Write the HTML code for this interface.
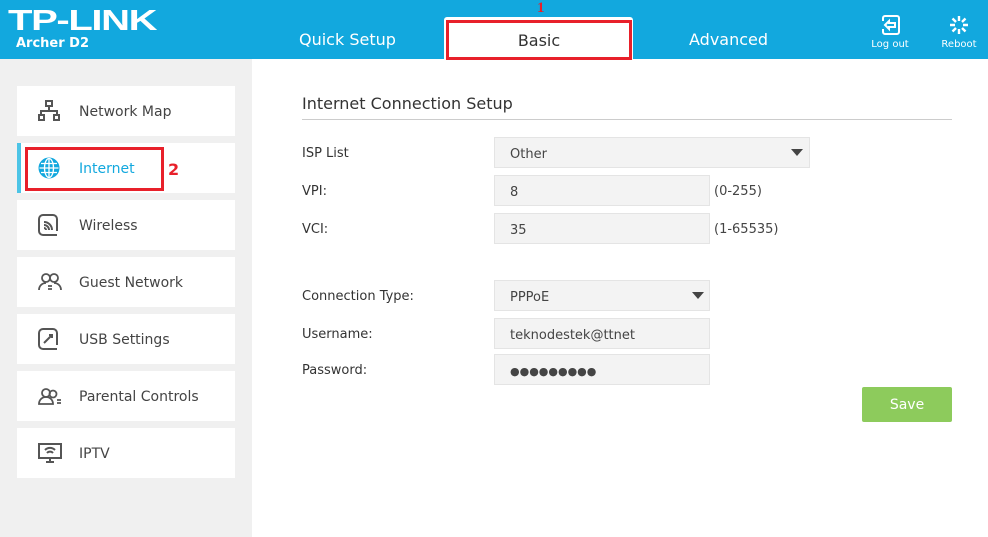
<!DOCTYPE html>
<html><head><meta charset="utf-8"><style>
*{margin:0;padding:0;box-sizing:border-box}
body{width:988px;height:537px;overflow:hidden;background:#fff;font-family:"DejaVu Sans","Liberation Sans",sans-serif;color:#333;position:relative}
.hdr{position:absolute;left:0;top:0;width:988px;height:59px;background:#12a8de}
.logo{position:absolute;left:8px;top:5px;color:#fff;font:bold 29px "Liberation Sans",sans-serif;letter-spacing:-1px;transform:scaleX(1.38);transform-origin:left}
.model{position:absolute;left:16px;top:36px;color:#fff;font:bold 13px "DejaVu Sans",sans-serif}
.tab{position:absolute;top:30px;color:#fff;font-size:16px}
.basic{position:absolute;left:444px;top:17px;width:189px;height:43px;background:#fff;border-radius:3px 3px 0 0}
.basicr{position:absolute;left:446px;top:20px;width:186px;height:40px;border:3px solid #e8202a;text-align:center;font-size:16px;color:#333;padding-top:8px}
.n1{position:absolute;left:537px;top:0px;color:#e8202a;font:bold 15px "Liberation Serif",serif}
.hi{position:absolute;color:#fff;font-size:10px;text-align:center}
.side{position:absolute;left:0;top:59px;width:252px;height:478px;background:#f0f0f0}
.item{position:absolute;left:17px;width:218px;height:50px;background:#fff;font-size:14px;color:#444}
.item span{position:absolute;left:62px;top:18px}
.item svg{position:absolute;left:21px;top:14px}
.lbl{position:absolute;left:302px;font-size:13px;color:#333}
.inp{position:absolute;left:494px;height:31px;background:#f3f3f3;border:1px solid #e4e4e4;font-size:13px;color:#444;padding:9px 0 0 15px}
.hint{position:absolute;font-size:13px;color:#444}
.arr{position:absolute;right:6px;top:11px;width:0;height:0;border-left:6px solid transparent;border-right:6px solid transparent;border-top:7px solid #444}
</style></head><body>
<div class="hdr">
<div class="logo">TP-LINK</div>
<div class="model">Archer D2</div>
<div class="tab" style="left:299px">Quick Setup</div>
<div class="tab" style="left:689px">Advanced</div>
<div class="basic"></div>
<div class="basicr">Basic</div>
<div class="n1">1</div>
<svg style="position:absolute;left:879px;top:15px" width="22" height="20" viewBox="0 0 22 20" fill="none" stroke="#fff" stroke-width="2"><path d="M4 6V3a2 2 0 0 1 2-2h12a2 2 0 0 1 2 2v14a2 2 0 0 1-2 2H6a2 2 0 0 1-2-2v-3"/><path d="M6 10l4-4v2h6v4h-6v2z"/></svg>
<div class="hi" style="left:866px;top:39px;width:48px">Log out</div>
<svg style="position:absolute;left:949px;top:15px" width="20" height="20" viewBox="0 0 20 20" stroke="#fff" stroke-width="2.4"><path d="M10 1v5M10 14v5M1 10h5M14 10h5M3.5 3.5l3.5 3.5M13 13l3.5 3.5M16.5 3.5L13 7M7 13l-3.5 3.5"/></svg>
<div class="hi" style="left:935px;top:39px;width:48px">Reboot</div>
</div>
<div class="side">
<div class="item" style="top:27px"><svg width="22" height="22" viewBox="0 0 22 22" fill="none" stroke="#555" stroke-width="2"><rect x="8" y="1" width="6" height="5"/><path d="M11 6v5M3 15v-4h16v4"/><rect x="1" y="15" width="5" height="5"/><rect x="16" y="15" width="5" height="5"/></svg><span>Network Map</span></div>
<div class="item" style="top:84px"><div style="position:absolute;left:0;top:0;width:4px;height:50px;background:#4cc4e6"></div><svg width="22" height="22" viewBox="0 0 22 22" fill="none" stroke="#12a8de" stroke-width="2"><circle cx="11" cy="11" r="9.5" fill="#12a8de"/><path d="M1.5 11h19M11 1.5v19M3 6.5h16M3 15.5h16" stroke="#fff" stroke-width="1.3"/><ellipse cx="11" cy="11" rx="4.5" ry="9.5" stroke="#fff" stroke-width="1.3"/></svg><span style="color:#12a8de">Internet</span>
<div style="position:absolute;left:8px;top:4px;width:139px;height:44px;border:3px solid #e8202a"></div>
<div style="position:absolute;left:151px;top:17px;color:#e8202a;font:bold 16px 'DejaVu Sans',sans-serif">2</div></div>
<div class="item" style="top:141px"><svg width="22" height="22" viewBox="0 0 22 22" fill="none" stroke="#555" stroke-width="2"><path d="M19 17V5a4 4 0 0 0-4-4H5a4 4 0 0 0-4 4v12a4 4 0 0 0 4 4h14"/><path d="M6 8a8 8 0 0 1 8 8M6 11a5 5 0 0 1 5 5M6 14a2 2 0 0 1 2 2"/></svg><span>Wireless</span></div>
<div class="item" style="top:198px"><svg width="24" height="22" viewBox="0 0 24 22" fill="none" stroke="#555" stroke-width="1.8"><circle cx="8" cy="7" r="4"/><circle cx="16" cy="7" r="4"/><path d="M1 19c0-4 3-7 7-7M23 19c0-4-3-7-7-7M10 15h4M10 18h4"/></svg><span>Guest Network</span></div>
<div class="item" style="top:255px"><svg width="22" height="22" viewBox="0 0 22 22" fill="none" stroke="#555" stroke-width="2"><path d="M19 17V5a4 4 0 0 0-4-4H5a4 4 0 0 0-4 4v12a4 4 0 0 0 4 4h14"/><path d="M6 15l8-8M11 7h3v3"/></svg><span>USB Settings</span></div>
<div class="item" style="top:312px"><svg width="24" height="22" viewBox="0 0 24 22" fill="none" stroke="#555" stroke-width="1.8"><circle cx="8" cy="8" r="4"/><circle cx="15" cy="9" r="3.5"/><path d="M1 19c0-4 3-7 7-7s7 3 7 7zM19 15h4M19 18h4"/></svg><span>Parental Controls</span></div>
<div class="item" style="top:369px"><svg width="24" height="22" viewBox="0 0 24 22" fill="none" stroke="#555" stroke-width="2"><rect x="1" y="2" width="22" height="14"/><path d="M8 20h8M12 16v4M7 8a7 7 0 0 1 10 0M9 11a4 4 0 0 1 6 0"/></svg><span>IPTV</span></div>
</div>
<div style="position:absolute;left:302px;top:94px;font-size:16px;color:#333">Internet Connection Setup</div>
<div style="position:absolute;left:302px;top:119px;width:650px;height:1px;background:#ccc"></div>
<div class="lbl" style="top:146px">ISP List</div>
<div class="inp" style="top:137px;width:316px">Other<div class="arr"></div></div>
<div class="lbl" style="top:184px">VPI:</div>
<div class="inp" style="top:175px;width:216px">8</div><div class="hint" style="left:714px;top:184px">(0-255)</div>
<div class="lbl" style="top:222px">VCI:</div>
<div class="inp" style="top:213px;width:216px">35</div><div class="hint" style="left:714px;top:222px">(1-65535)</div>
<div class="lbl" style="top:289px">Connection Type:</div>
<div class="inp" style="top:280px;width:216px">PPPoE<div class="arr" style="right:5px"></div></div>
<div class="lbl" style="top:327px">Username:</div>
<div class="inp" style="top:318px;width:216px">teknodestek@ttnet</div>
<div class="lbl" style="top:363px">Password:</div>
<div class="inp" style="top:354px;width:216px;font-size:11px;padding-top:10px">●●●●●●●●●</div>
<div style="position:absolute;left:862px;top:387px;width:90px;height:35px;background:#8dcb5c;color:#fff;font-size:14px;text-align:center;line-height:37px;border-radius:2px">Save</div>
</body></html>
